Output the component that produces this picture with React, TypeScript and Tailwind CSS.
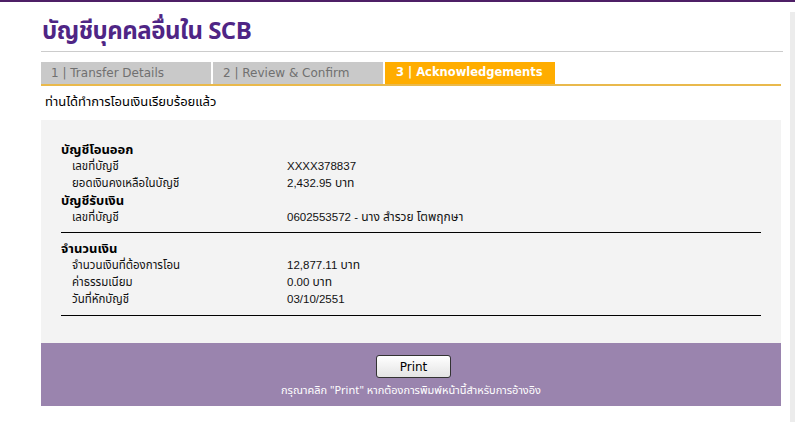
import React from "react";

const thai = { fontFamily: "Tahoma, 'Noto Sans Thai', 'Noto Sans', 'DejaVu Sans', sans-serif" };
const lat = { fontFamily: "'Liberation Sans', Arial, sans-serif" };

function L({ children }: { children: React.ReactNode }) {
  return (
    <span className="text-[11.5px]" style={lat}>
      {children}
    </span>
  );
}

function Row({ label, children }: { label: string; children: React.ReactNode }) {
  return (
    <div className="flex h-[17px] items-center text-[11.5px] leading-[13px] text-[#111]">
      <div className="w-[215px]">{label}</div>
      <div className="whitespace-nowrap text-[12px]">{children}</div>
    </div>
  );
}

function Header({ children }: { children: React.ReactNode }) {
  return <div className="flex h-[17px] items-center pt-[1px] text-[13px] font-bold leading-[15px] text-black">{children}</div>;
}

export default function App() {
  return (
    <div className="relative h-[422px] w-[795px] overflow-hidden bg-white" style={thai}>
      <div className="h-[2px] bg-[#4e1f66]" />
      <div className="flex">
        <div className="ml-[41px] w-[742px]">
          <div className="flex h-[49px] items-end pb-[4px] pl-[1px]">
            <span
              className="text-[24px] font-bold leading-[30px] tracking-[-0.5px] text-[#4f2585]"
              style={{ fontFamily: "'Noto Sans Thai', 'Noto Sans', sans-serif" }}
            >
              บัญชีบุคคลอื่นใน SCB
            </span>
          </div>
          <div className="h-px w-[742px] bg-[#cccccc]" />
          <div className="mt-[10px] w-[740px]">
            <div className="flex h-[22px] gap-[2px]" style={{ fontFamily: "'DejaVu Sans', Verdana, sans-serif" }}>
              <div className="flex w-[170px] items-center bg-[#c9c9c9] pl-[10px] text-[12px] text-[#707070]">1 | Transfer Details</div>
              <div className="flex w-[170px] items-center bg-[#c9c9c9] pl-[10px] text-[12px] text-[#707070]">2 | Review &amp; Confirm</div>
              <div className="flex w-[170px] items-center bg-[#ffad00] pl-[11px] text-[11.5px] font-bold text-white">3 | Acknowledgements</div>
            </div>
            <div className="h-[2px] bg-[#e9b94c]" />
          </div>
          <div className="flex h-[34px] items-center pl-[4px] text-[13px] text-black">ท่านได้ทำการโอนเงินเรียบร้อยแล้ว</div>
          <div className="w-[740px] bg-[#f3f3f3] px-[20px] pt-[21px] pb-[27px]">
            <Header>บัญชีโอนออก</Header>
            <div className="pl-[11px]">
              <Row label="เลขที่บัญชี">
                <L>XXXX378837</L>
              </Row>
              <Row label="ยอดเงินคงเหลือในบัญชี">
                <L>2,432.95 </L>บาท
              </Row>
            </div>
            <Header>บัญชีรับเงิน</Header>
            <div className="pl-[11px]">
              <Row label="เลขที่บัญชี">
                <L>0602553572 - </L>นาง สำรวย โตพฤกษา
              </Row>
            </div>
            <div className="mt-[6px] h-[1px] bg-black" />
            <div className="mt-[7px]">
              <Header>จำนวนเงิน</Header>
            </div>
            <div className="pl-[11px]">
              <Row label="จำนวนเงินที่ต้องการโอน">
                <L>12,877.11 </L>บาท
              </Row>
              <Row label="ค่าธรรมเนียม">
                <L>0.00 </L>บาท
              </Row>
              <Row label="วันที่หักบัญชี">
                <L>03/10/2551</L>
              </Row>
            </div>
            <div className="mt-[7px] h-[1px] bg-black" />
          </div>
          <div className="flex h-[63px] w-[740px] flex-col items-center bg-[#9a84ae] pt-[12px]">
            <button
              className="ml-[5px] h-[23px] w-[75px] rounded-[3px] border border-[#333] bg-gradient-to-b from-white to-[#e4e4e4] text-[12px] text-black"
              style={{ fontFamily: "Tahoma, 'DejaVu Sans', sans-serif" }}
            >
              Print
            </button>
            <div className="mt-[5px] text-[11px] text-white">กรุณาคลิก "Print" หากต้องการพิมพ์หน้านี้สำหรับการอ้างอิง</div>
          </div>
        </div>
        <div className="ml-auto mt-[10px] h-[412px] w-[5px] bg-[#ececec]" />
      </div>
    </div>
  );
}
